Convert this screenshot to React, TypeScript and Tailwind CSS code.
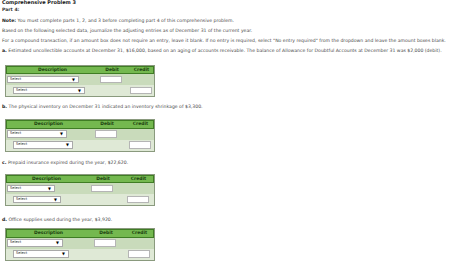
import React from 'react';

type Entry = {
  desc: number;
  debit: number;
  credit: number;
  select: number;
};

const font = { fontFamily: '"DejaVu Sans", Verdana, sans-serif' };

const SelectBox: React.FC<{ width: number; indent?: boolean }> = ({ width, indent }) => (
  <div
    className={`flex h-[7.5px] items-center justify-between border border-[#a9a9a9] bg-white pl-[2px] pr-[3px] ${indent ? 'ml-[7px]' : 'ml-[1px]'}`}
    style={{ width }}
  >
    <span className="text-[3.6px] leading-none text-[#222]">Select</span>
    <span className="text-[3.8px] leading-none text-black">▼</span>
  </div>
);

const AmountBox: React.FC = () => (
  <div className="mx-auto h-[7.5px] w-[22px] border border-[#b5b5b5] bg-white" />
);

const JournalTable: React.FC<{ cfg: Entry; className?: string }> = ({ cfg, className }) => {
  const cols = { gridTemplateColumns: `${cfg.desc}px ${cfg.debit}px ${cfg.credit}px` };
  return (
    <div className={`ml-[3px] w-[150px] border border-[#8a9a7e] ${className ?? ''}`}>
      <div
        className="grid h-[8.5px] items-center border border-[#3f7d24] bg-[#74b84f] text-[4.5px] font-bold leading-none text-[#1c4210]"
        style={cols}
      >
        <div className="text-center">Description</div>
        <div className="text-center">Debit</div>
        <div className="text-center">Credit</div>
      </div>
      <div className="grid h-[11px] items-center bg-[#c9dbbb]" style={cols}>
        <SelectBox width={cfg.select} />
        <AmountBox />
        <div />
      </div>
      <div className="grid h-[11px] items-center bg-[#dfe9d6]" style={cols}>
        <SelectBox width={cfg.select} indent />
        <div />
        <AmountBox />
      </div>
    </div>
  );
};

const tables: Record<string, Entry> = {
  a: { desc: 91, debit: 28, credit: 31, select: 72 },
  b: { desc: 83, debit: 34, credit: 33, select: 60 },
  c: { desc: 79, debit: 34, credit: 37, select: 48 },
  d: { desc: 83, debit: 32, credit: 35, select: 56 },
};

export default function App() {
  return (
    <div className="h-[268px] w-[474px] overflow-hidden bg-white px-[2px] text-[4.6px] text-[#4a4a4a]" style={font}>
      <div className="h-[5px] text-[5px] font-bold leading-[5px] text-[#222]">Comprehensive Problem 3</div>
      <div className="h-[10.5px] font-bold leading-[10.5px] text-[#333]">Part 4:</div>
      <div className="leading-[10.3px]">
        <span className="font-bold text-[#222]">Note:</span> You must complete parts 1, 2, and 3 before completing part 4 of this comprehensive problem.
      </div>
      <div className="leading-[10.3px]">
        Based on the following selected data, journalize the adjusting entries as of December 31 of the current year.
      </div>
      <div className="leading-[10.3px]">
        For a compound transaction, if an amount box does not require an entry, leave it blank. If no entry is required, select "No entry required" from the dropdown and leave the amount boxes blank.
      </div>
      <div className="leading-[10.3px]">
        <span className="font-bold text-[#222]">a.</span> Estimated uncollectible accounts at December 31, $16,000, based on an aging of accounts receivable. The balance of Allowance for Doubtful Accounts at December 31 was $2,000 (debit).
      </div>

      <JournalTable cfg={tables.a} className="mt-[8px]" />

      <div className="mt-[5px] leading-[10px]">
        <span className="font-bold text-[#222]">b.</span> The physical inventory on December 31 indicated an inventory shrinkage of $3,300.
      </div>
      <JournalTable cfg={tables.b} className="mt-[7px]" />

      <div className="mt-[6px] leading-[10px]">
        <span className="font-bold text-[#222]">c.</span> Prepaid insurance expired during the year, $22,620.
      </div>
      <JournalTable cfg={tables.c} className="mt-[6px]" />

      <div className="mt-[9px] leading-[10px]">
        <span className="font-bold text-[#222]">d.</span> Office supplies used during the year, $3,920.
      </div>
      <JournalTable cfg={tables.d} className="mt-[3px]" />
    </div>
  );
}
